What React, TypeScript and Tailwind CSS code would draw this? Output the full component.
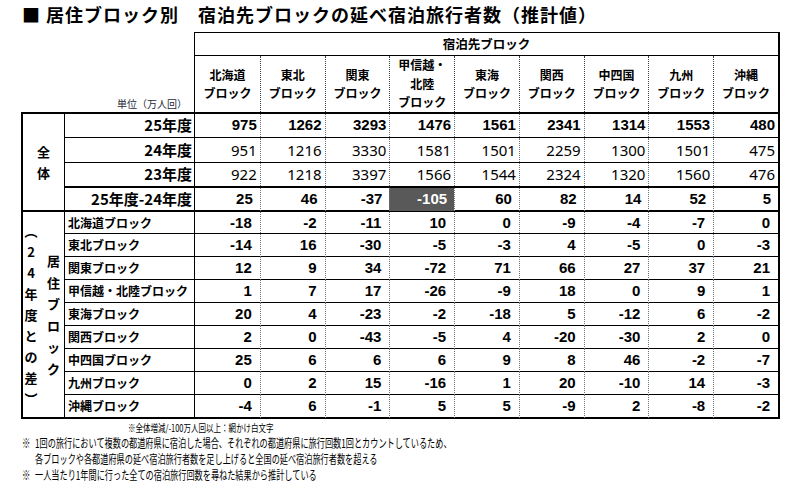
const jp = "font-['Noto_Sans_CJK_JP',sans-serif]";
const num = "font-['Liberation_Sans',Arial,sans-serif]";

const heads: string[][] = [
  ["北海道", "ブロック"],
  ["東北", "ブロック"],
  ["関東", "ブロック"],
  ["甲信越・", "北陸", "ブロック"],
  ["東海", "ブロック"],
  ["関西", "ブロック"],
  ["中四国", "ブロック"],
  ["九州", "ブロック"],
  ["沖縄", "ブロック"],
];

type TopRow = {
  label: string;
  values: number[];
  bold: boolean;
  cls: string;
  pad: string;
};

const topRows: TopRow[] = [
  { label: "25年度", values: [975, 1262, 3293, 1476, 1561, 2341, 1314, 1553, 480], bold: true, cls: "h-[24px] border-b border-black", pad: "pr-[3px]" },
  { label: "24年度", values: [951, 1216, 3330, 1581, 1501, 2259, 1300, 1501, 475], bold: false, cls: "h-[25px] border-b border-black", pad: "pr-[3px]" },
  { label: "23年度", values: [922, 1218, 3397, 1566, 1544, 2324, 1320, 1560, 476], bold: false, cls: "h-[25px] border-b-2 border-black", pad: "pr-[3px]" },
  { label: "25年度-24年度", values: [25, 46, -37, -105, 60, 82, 14, 52, 5], bold: true, cls: "h-[22px]", pad: "pr-[7px]" },
];

const diffRows: [string, number[]][] = [
  ["北海道ブロック", [-18, -2, -11, 10, 0, -9, -4, -7, 0]],
  ["東北ブロック", [-14, 16, -30, -5, -3, 4, -5, 0, -3]],
  ["関東ブロック", [12, 9, 34, -72, 71, 66, 27, 37, 21]],
  ["甲信越・北陸ブロック", [1, 7, 17, -26, -9, 18, 0, 9, 1]],
  ["東海ブロック", [20, 4, -23, -2, -18, 5, -12, 6, -2]],
  ["関西ブロック", [2, 0, -43, -5, 4, -20, -30, 2, 0]],
  ["中四国ブロック", [25, 6, 6, 6, 9, 8, 46, -2, -7]],
  ["九州ブロック", [0, 2, 15, -16, 1, 20, -10, 14, -3]],
  ["沖縄ブロック", [-4, 6, -1, 5, 5, -9, 2, -8, -2]],
];

const diffNote = ["︵", "2", "4", "年", "度", "と", "の", "差", "︶"];
const residence = ["居", "住", "ブ", "ロ", "ッ", "ク"];

export default function App() {
  return (
    <div className={`w-[800px] h-[485px] bg-white text-black overflow-hidden ${jp}`}>
      <h1 className="h-[32px] pl-[22px] pt-[3px] text-[18px] leading-[22px] font-bold tracking-[1px] whitespace-nowrap">
        ■ 居住ブロック別　宿泊先ブロックの延べ宿泊旅行者数（推計値）
      </h1>

      <div className="ml-[21px] w-[759px]">
        {/* 見出し */}
        <div className="flex">
          <div className="w-[173px] flex items-end justify-end pr-[7px] pb-[2px] text-[10px] leading-[12px] text-gray-800">
            単位（万人回）
          </div>
          <div className="flex-1 border-t border-l border-r-2 border-black">
            <div className="h-[23px] border-b border-black flex items-center justify-center text-[12.5px] font-bold">
              宿泊先ブロック
            </div>
            <div className="h-[56px] grid grid-cols-9">
              {heads.map((h, i) => (
                <div
                  key={i}
                  className={`flex flex-col items-center justify-center text-[12px] font-bold leading-[18.5px] ${i > 0 ? "border-l border-dotted border-gray-700" : ""}`}
                >
                  {h.map((t) => (
                    <span key={t}>{t}</span>
                  ))}
                </div>
              ))}
            </div>
          </div>
        </div>

        {/* 全体 */}
        <div className="flex border-l-2 border-r-2 border-t-2 border-b-2 border-black">
          <div className="w-[42px] border-r border-black flex flex-col items-center justify-center text-[13px] font-bold leading-[21px]">
            <span>全</span>
            <span>体</span>
          </div>
          <div className="flex-1 flex flex-col">
            {topRows.map((r) => (
              <div key={r.label} className={`flex ${r.cls}`}>
                <div className="w-[130px] border-r border-black flex items-center justify-end pr-[2px] text-[15px] font-bold">
                  {r.label}
                </div>
                <div className="flex-1 grid grid-cols-9">
                  {r.values.map((v, i) => (
                    <div
                      key={i}
                      className={`flex items-center justify-end text-[15px] ${r.pad} ${r.bold ? `${num} font-bold` : "font-['Noto_Sans',sans-serif] font-normal"} ${i > 0 ? "border-l border-dotted border-gray-500" : ""} ${v <= -100 ? "bg-[#595959] text-white" : ""}`}
                    >
                      {v}
                    </div>
                  ))}
                </div>
              </div>
            ))}
          </div>
        </div>

        {/* 24年度との差 */}
        <div className="flex border-l-2 border-r-2 border-b-2 border-black">
          <div className="w-[42px] border-r border-black flex text-[13px] font-bold">
            <div className="w-[16px] flex flex-col items-center justify-center leading-[21px]">
              {diffNote.map((c, i) => (
                <span key={i}>{c}</span>
              ))}
            </div>
            <div className="flex-1 pl-[4px] flex flex-col items-center justify-center leading-[21.5px]">
              {residence.map((c, i) => (
                <span key={i}>{c}</span>
              ))}
            </div>
          </div>
          <div className="flex-1 flex flex-col">
            {diffRows.map(([label, vals], ri) => (
              <div
                key={label}
                className={`flex ${ri === 0 ? "h-[22px] border-b border-black" : ri === diffRows.length - 1 ? "h-[22px]" : "h-[23px] border-b border-black"}`}
              >
                <div className="w-[130px] border-r border-black flex items-center pl-[3px] text-[12px] font-bold whitespace-nowrap">
                  {label}
                </div>
                <div className="flex-1 grid grid-cols-9">
                  {vals.map((v, i) => (
                    <div
                      key={i}
                      className={`flex items-center justify-end pr-[8px] text-[15px] font-bold ${num} ${i > 0 ? "border-l border-dotted border-gray-500" : ""}`}
                    >
                      {v}
                    </div>
                  ))}
                </div>
              </div>
            ))}
          </div>
        </div>
      </div>

      <div className="ml-[128px] mt-[3px] h-[12px] text-[10px] leading-[12px] whitespace-nowrap origin-left scale-x-[0.75]">
        ※全体増減/-100万人回以上：網かけ白文字
      </div>

      <div className="mt-[1px] text-[12px] leading-[16px]">
        <div className="flex pl-[22px] whitespace-nowrap">
          <span className="w-[13px] origin-left scale-x-[0.7]">※</span>
          <span className="origin-left scale-x-[0.68]">
            1回の旅行において複数の都道府県に宿泊した場合、それぞれの都道府県に旅行回数1回とカウントしているため、
          </span>
        </div>
        <div className="flex pl-[35px] whitespace-nowrap">
          <span className="origin-left scale-x-[0.68]">
            各ブロックや各都道府県の延べ宿泊旅行者数を足し上げると全国の延べ宿泊旅行者数を超える
          </span>
        </div>
        <div className="flex pl-[22px] whitespace-nowrap">
          <span className="w-[13px] origin-left scale-x-[0.7]">※</span>
          <span className="origin-left scale-x-[0.68]">
            一人当たり1年間に行った全ての宿泊旅行回数を尋ねた結果から推計している
          </span>
        </div>
      </div>
    </div>
  );
}
